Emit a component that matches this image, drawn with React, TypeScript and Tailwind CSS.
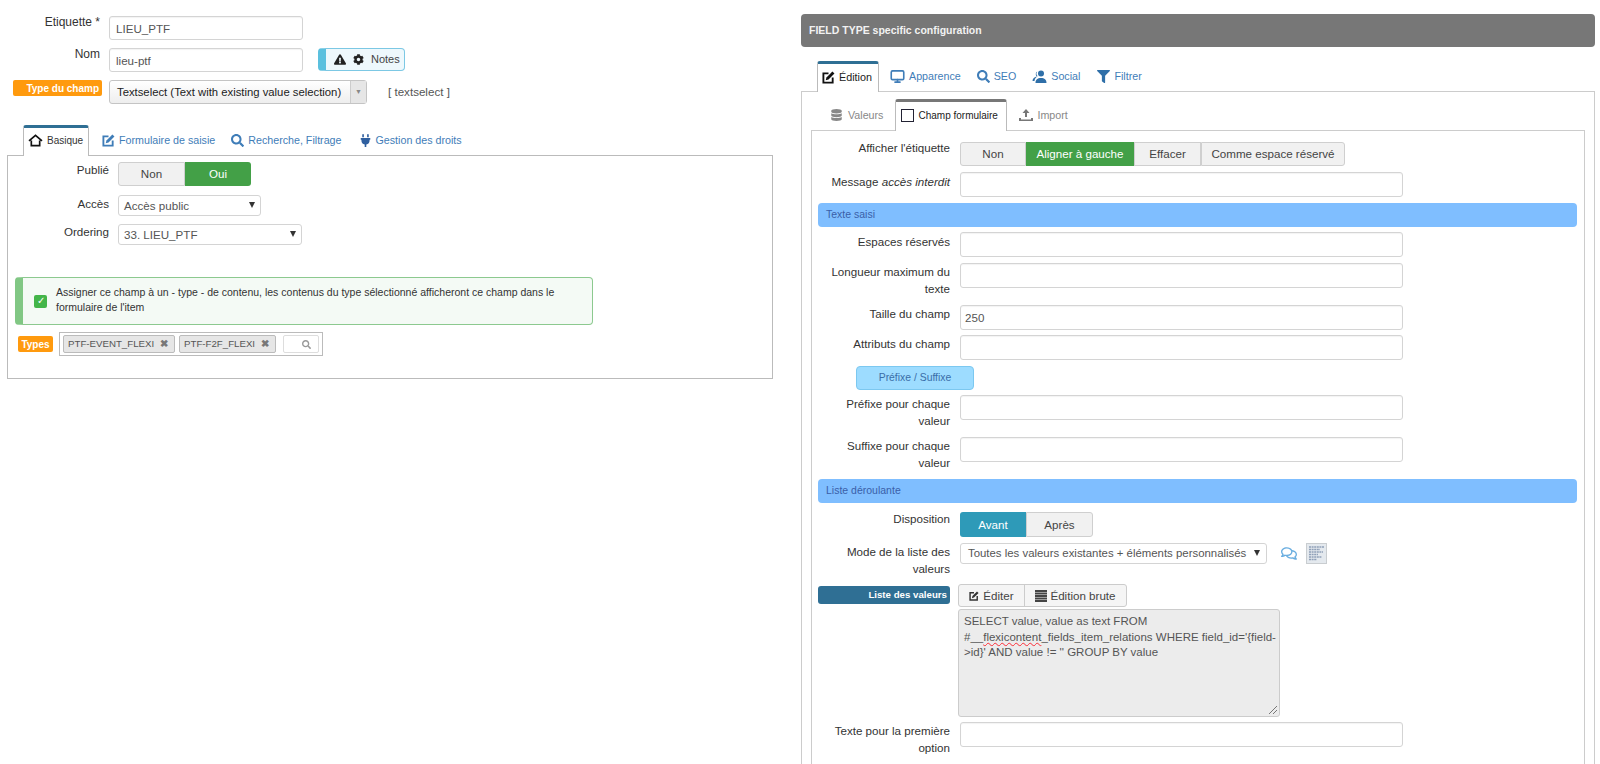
import React from 'react';
import { FaCog, FaDatabase, FaExclamationTriangle, FaFilter, FaPlug, FaRegComments, FaSearch } from 'react-icons/fa';
import { FiMonitor } from 'react-icons/fi';

const Label = ({ children, className = '' }: { children: React.ReactNode; className?: string }) => (
  <div className={`text-right text-[11.6px] leading-[17px] text-[#333] ${className}`}>{children}</div>
);

const Field = ({ value = '', className = '' }: { value?: string; className?: string }) => (
  <input
    readOnly
    value={value}
    className={`h-[24px] rounded-[3px] border border-[#d4d4d4] bg-white text-[11.6px] text-[#555] shadow-[inset_0_1px_1px_rgba(0,0,0,0.05)] outline-none ${className}`}
  />
);

const FormRow = ({ label, value, className = '', labelClass = '' }: { label: React.ReactNode; value?: string; className?: string; labelClass?: string }) => (
  <div className={`flex ${className}`}>
    <Label className={`w-[132px] shrink-0 ${labelClass}`}>{label}</Label>
    <Field value={value} className="ml-[10px] h-[25px] w-[443px] px-[4px]" />
  </div>
);

const Section = ({ title, className = '' }: { title: string; className?: string }) => (
  <div className={`flex h-[24px] items-center rounded-[4px] bg-[#7fbeff] pl-[8px] text-[10.5px] text-[#3a5ea8] ${className}`}>{title}</div>
);

const Segment = ({ children, className = '' }: { children: React.ReactNode; className?: string }) => (
  <div className={`flex h-full items-center justify-center text-[11.6px] ${className}`}>{children}</div>
);

const Off = 'border border-[#cfcfcf] bg-[#f1f1f1] text-[#444]';

const Caret = ({ className = '' }: { className?: string }) => (
  <svg viewBox="0 0 8 8" className={`absolute h-[6px] w-[6px] fill-[#333] ${className}`}>
    <path d="M0 0h8L4 8z" />
  </svg>
);

const Chip = ({ text, className = '' }: { text: string; className?: string }) => (
  <div className={`flex h-[18px] items-center justify-between rounded-[2px] border border-[#bbb] bg-[#e6e6e6] pl-[4px] pr-[6px] text-[9.7px] text-[#555] ${className}`}>
    <span className="whitespace-nowrap">{text}</span>
    <span className="text-[10px] font-bold leading-none text-[#777]">✖</span>
  </div>
);

const Tab = ({ icon, text, className = '' }: { icon: React.ReactNode; text: string; className?: string }) => (
  <div className={`flex items-center gap-[4px] whitespace-nowrap text-[10.7px] font-medium text-[#3f7db8] ${className}`}>
    {icon}
    <span>{text}</span>
  </div>
);

const HomeIcon = () => (
  <svg viewBox="0 0 16 14" className="h-[13px] w-[15px] fill-none stroke-[#111] stroke-[1.8]">
    <path d="M1 7.5 8 1.5l7 6M3.5 7v5.5h9V7" />
  </svg>
);

const EditIcon = ({ color, className = 'h-[13px] w-[13px]' }: { color: string; className?: string }) => (
  <svg viewBox="0 0 14 14" className={className}>
    <path d="M7 2.5H1.5v10h10V7" fill="none" stroke={color} strokeWidth="2" />
    <path d="M11.2.6 13.4 2.8 7 9.2l-3 .8.8-3z" fill={color} />
  </svg>
);

const SocialIcon = () => (
  <svg viewBox="0 0 15 13" className="h-[13px] w-[15px] fill-[#2f6fa8]">
    <circle cx="9" cy="3.5" r="3" />
    <path d="M3.5 13c0-3.5 2-5 5.500-5s5.500 1.500 5.500 5zM5.200 1.500a3 3 0 0 0-.2 5C2.500 7 .5 8.500.5 11h2c.3-2 1-3.200 2.500-4.200.5-.3.500-.6.300-1a3.500 3.500 0 0 1-.1-4.300z" />
  </svg>
);

const UploadIcon = () => (
  <svg viewBox="0 0 14 12" className="h-[12px] w-[14px] fill-[#777]">
    <path d="M7 0 3.500 4H6v4h2V4h2.500zM0 9h2v1.500h10V9h2v3H0z" />
  </svg>
);

const BarsIcon = () => (
  <svg viewBox="0 0 12 12" className="h-[12px] w-[12px] fill-[#444]">
    <path d="M0 0h12v2H0zM0 2.500h12v2H0zM0 5h12v2H0zM0 7.500h12v2H0zM0 10h12v2H0z" />
  </svg>
);

const DocIcon = () => (
  <svg viewBox="0 0 21 21" className="h-[21px] w-[21px]">
    <rect width="21" height="21" fill="#c9cdd0" />
    <rect x="1" y="1" width="19" height="19" fill="#e4e9ee" />
    <path d="M3 4h15M3 6.500h11M3 9h14M3 11.500h9M3 14h13M3 16.500h8" stroke="#8fa0b8" strokeWidth="1.400" strokeDasharray="2 .6" />
  </svg>
);

const Grip = () => (
  <svg viewBox="0 0 8 8" className="absolute bottom-[2px] right-[2px] h-[8px] w-[8px] stroke-[#777]">
    <path d="M0 8 8 0M4 8l4-4" />
  </svg>
);

export default function App() {
  return (
    <div className="flex h-[764px] overflow-hidden bg-white font-['Liberation_Sans',Arial,sans-serif]">
      {/* left column */}
      <div className="w-[801px] shrink-0 pl-[7px] pt-[16px]">
        <div className="flex">
          <Label className="-mt-[2px] w-[93px] text-[12px]">Etiquette *</Label>
          <Field value="LIEU_PTF" className="ml-[9px] w-[194px] px-[6px]" />
        </div>
        <div className="mt-[8px] flex">
          <Label className="-mt-[2px] w-[93px] text-[12px]">Nom</Label>
          <Field value="lieu-ptf" className="ml-[9px] w-[194px] px-[6px]" />
          <div className="ml-[15px] flex h-[23px] w-[87px] items-center rounded-[4px] border border-[#7cc8e4] border-l-[8px] border-l-[#5bc0de] bg-[#eef8fc] pl-[8px] text-[11px] text-[#444]">
            <FaExclamationTriangle className="h-[11px] w-[12px] text-[#222]" />
            <FaCog className="ml-[7px] h-[11px] w-[11px] text-[#222]" />
            <span className="ml-[7px]">Notes</span>
          </div>
        </div>
        <div className="mt-[8px] flex">
          <div className="ml-[6px] flex h-[16px] w-[89px] items-center justify-end rounded-[2px] bg-[#ff9a0e] pr-[3px] text-[10px] font-bold text-white">Type du champ</div>
          <div className="relative ml-[7px] flex h-[24px] w-[258px] items-center whitespace-nowrap rounded-[3px] border border-[#c4c4c4] bg-[linear-gradient(#fff,#eee)] pl-[7px] text-[11.3px] text-[#222]">
            Textselect (Text with existing value selection)
            <div className="absolute right-0 top-0 flex h-full w-[16px] items-center justify-center border-l border-[#ccc] bg-[#e6e6e6] text-[7px] text-[#888]">▼</div>
          </div>
          <div className="ml-[21px] pt-[3px] text-[11.6px] text-[#555]">[ textselect ]</div>
        </div>

        <div className="mt-[21px] flex h-[30px] items-end pl-[16px]">
          <div className="z-10 -mb-px flex h-[31px] w-[66px] items-center gap-[4px] rounded-t-[3px] border border-b-0 border-[#bbb] border-t-[3px] border-t-[#2f6f94] bg-white pb-[3px] pl-[4px] text-[10px] font-medium text-[#333]">
            <HomeIcon />
            Basique
          </div>
          <Tab className="ml-[13px] h-[30px]" icon={<EditIcon color="#3f7db8" />} text="Formulaire de saisie" />
          <Tab className="ml-[16px] h-[30px]" icon={<FaSearch className="h-[13px] w-[13px] text-[#3f7db8]" />} text="Recherche, Filtrage" />
          <Tab className="ml-[17px] h-[30px]" icon={<FaPlug className="h-[13px] w-[13px] text-[#2f5f9f]" />} text="Gestion des droits" />
        </div>
        <div className="h-[224px] w-[766px] border border-[#bbb] pl-[7px] pt-[6px]">
          <div className="flex">
            <Label className="-mt-[1px] w-[94px]">Publié</Label>
            <div className="ml-[9px] flex h-[24px]">
              <Segment className={`w-[67px] rounded-l-[3px] ${Off}`}>Non</Segment>
              <Segment className="w-[66px] rounded-r-[3px] bg-[#43a047] text-white">Oui</Segment>
            </div>
          </div>
          <div className="mt-[9px] flex">
            <Label className="w-[94px]">Accès</Label>
            <div className="relative ml-[9px] flex h-[21px] w-[143px] items-center rounded-[3px] border border-[#d4d4d4] pl-[5px] text-[11.6px] text-[#555]">
              Accès public
              <Caret className="right-[5px] top-[6px]" />
            </div>
          </div>
          <div className="mt-[8px] flex">
            <Label className="-mt-[1px] w-[94px]">Ordering</Label>
            <div className="relative ml-[9px] flex h-[21px] w-[184px] items-center rounded-[3px] border border-[#d4d4d4] pl-[5px] text-[11.6px] text-[#555]">
              33. LIEU_PTF
              <Caret className="right-[5px] top-[6px]" />
            </div>
          </div>
          <div className="mt-[32px] flex h-[48px] w-[578px] items-center rounded-[4px] border border-[#8cc98f] border-l-[8px] border-l-[#81c784] bg-[#f4faf5] pl-[11px] text-[10.5px] leading-[15px] text-[#333]">
            <div className="flex h-[13px] w-[13px] shrink-0 items-center justify-center rounded-[2px] bg-[#43b549] text-[10px] leading-none text-white">✓</div>
            <div className="-mt-[3px] ml-[9px] w-[510px]">Assigner ce champ à un - type - de contenu, les contenus du type sélectionné afficheront ce champ dans le formulaire de l'item</div>
          </div>
          <div className="mt-[7px] flex items-center">
            <div className="ml-[3px] flex h-[16px] w-[35px] items-center justify-center rounded-[2px] bg-[#ff9a0e] text-[10px] font-bold text-white">Types</div>
            <div className="ml-[6px] flex h-[24px] w-[264px] items-center border border-[#bbb] pl-[3px]">
              <Chip text="PTF-EVENT_FLEXI" className="w-[112px]" />
              <Chip text="PTF-F2F_FLEXI" className="ml-[4px] w-[97px]" />
              <div className="ml-[7px] flex h-[18px] w-[36px] items-center justify-end rounded-[2px] border border-[#ddd] pr-[7px]">
                <FaSearch className="h-[9px] w-[9px] text-[#999]" />
              </div>
            </div>
          </div>
        </div>
      </div>

      {/* right column */}
      <div className="w-[794px] shrink-0 pt-[14px]">
        <div className="flex h-[33px] items-center rounded-[4px] bg-[#777] pl-[8px] text-[10.5px] font-bold text-[#f2f2f2]">FIELD TYPE specific configuration</div>
        <div className="mt-[14px] flex h-[30px] items-end pl-[16px]">
          <div className="z-10 -mb-px flex h-[31px] w-[62px] items-center gap-[4px] rounded-t-[3px] border border-b-0 border-[#bbb] border-t-[3px] border-t-[#2f6f94] bg-white pb-[2px] pl-[4px] text-[10.8px] font-medium text-[#222]">
            <EditIcon color="#111" />
            Édition
          </div>
          <Tab className="ml-[11px] h-[30px]" icon={<FiMonitor strokeWidth={2.6} className="h-[15px] w-[15px] text-[#3f7db8]" />} text="Apparence" />
          <Tab className="ml-[16px] h-[30px]" icon={<FaSearch className="h-[13px] w-[13px] text-[#3f7db8]" />} text="SEO" />
          <Tab className="ml-[16px] h-[30px]" icon={<SocialIcon />} text="Social" />
          <Tab className="ml-[17px] h-[30px]" icon={<FaFilter className="h-[13px] w-[13px] text-[#2f6fa8]" />} text="Filtrer" />
        </div>
        <div className="border border-b-0 border-[#ccc] pl-[9px] pr-[9px] pt-[6px]">
          <div className="flex h-[32px] items-end pl-[19px]">
            <Tab className="h-[30px] gap-[5px] font-normal text-[#888]" icon={<FaDatabase className="h-[12px] w-[13px] text-[#888]" />} text="Valeurs" />
            <div className="z-10 -mb-px ml-[12px] flex h-[32px] w-[112px] items-center gap-[4px] rounded-t-[3px] border border-b-0 border-[#bbb] border-t-[3px] border-t-[#777] bg-white pb-[2px] pl-[5px] text-[10px] font-medium text-[#222]">
              <div className="h-[13px] w-[13px] border border-[#223]" />
              Champ formulaire
            </div>
            <Tab className="ml-[12px] h-[30px] font-normal text-[#888]" icon={<UploadIcon />} text="Import" />
          </div>
          <div className="h-[640px] border border-[#ccc] pl-[6px] pr-[7px] pt-[11px]">
            <div className="flex">
              <Label className="-mt-[3px] w-[132px]">Afficher l'étiquette</Label>
              <div className="ml-[10px] flex h-[24px]">
                <Segment className={`w-[66px] rounded-l-[3px] ${Off}`}>Non</Segment>
                <Segment className="w-[108px] bg-[#43a047] text-white">Aligner à gauche</Segment>
                <Segment className={`w-[67px] ${Off}`}>Effacer</Segment>
                <Segment className={`w-[144px] rounded-r-[3px] ${Off}`}>Comme espace réservé</Segment>
              </div>
            </div>
            <FormRow className="mt-[6px]" labelClass="pt-[1px]" label={<>Message <i>accès interdit</i></>} />
            <Section title="Texte saisi" className="mt-[6px]" />
            <FormRow className="mt-[5px]" labelClass="pt-[1px]" label="Espaces réservés" />
            <FormRow className="mt-[6px]" label={<>Longueur maximum du<br />texte</>} />
            <FormRow className="mt-[8px]" label="Taille du champ" value="250" />
            <FormRow className="mt-[5px]" label="Attributs du champ" />
            <div className="ml-[38px] mt-[6px] flex h-[24px] w-[118px] items-center justify-center rounded-[4px] border border-[#7cc8f0] bg-[#9ddcff] text-[10.4px] text-[#3a6ea8]">Préfixe / Suffixe</div>
            <FormRow className="mt-[5px]" label={<>Préfixe pour chaque<br />valeur</>} />
            <FormRow className="mt-[8px]" label={<>Suffixe pour chaque<br />valeur</>} />
            <Section title="Liste déroulante" className="mt-[8px]" />
            <div className="mt-[9px] flex">
              <Label className="-mt-[2px] w-[132px]">Disposition</Label>
              <div className="ml-[10px] flex h-[25px]">
                <Segment className="w-[66px] rounded-l-[3px] bg-[#2e9ab8] text-white">Avant</Segment>
                <Segment className={`w-[67px] rounded-r-[3px] ${Off}`}>Après</Segment>
              </div>
            </div>
            <div className="mt-[6px] flex">
              <Label className="w-[132px]">Mode de la liste des<br />valeurs</Label>
              <div className="relative ml-[10px] flex h-[21px] w-[307px] items-center whitespace-nowrap rounded-[3px] border border-[#d4d4d4] pl-[7px] text-[11.4px] text-[#555]">
                Toutes les valeurs existantes + éléments personnalisés
                <Caret className="right-[6px] top-[6px]" />
              </div>
              <FaRegComments className="ml-[14px] mt-[3px] h-[15px] w-[16px] text-[#6aaee0]" />
              <div className="ml-[9px]"><DocIcon /></div>
            </div>
            <div className="mt-[7px] flex">
              <div className="mt-[2px] flex h-[18px] w-[132px] items-center justify-end rounded-[3px] bg-[#2f6f94] pr-[3px] text-[9.7px] font-bold text-white">Liste des valeurs</div>
              <div className="ml-[8px] w-[322px]">
                <div className="flex h-[23px] w-[169px] rounded-[3px] border border-[#ccc] bg-[#f5f5f5] text-[11.6px] text-[#444]">
                  <div className="flex w-[66px] items-center justify-center gap-[4px] border-r border-[#ccc]"><EditIcon color="#333" className="h-[10px] w-[10px]" />Éditer</div>
                  <div className="flex flex-1 items-center justify-center gap-[3px]"><BarsIcon />Édition brute</div>
                </div>
                <div className="relative mt-[2px] h-[108px] whitespace-nowrap rounded-[3px] border border-[#ccc] bg-[#ececec] pl-[5px] pt-[4px] text-[11.5px] leading-[15.5px] text-[#555]">
                  <div>SELECT value, value as text FROM</div>
                  <div>#__<span className="underline decoration-red-500 decoration-wavy decoration-1">flexicontent</span>_fields_item_relations WHERE field_id='{'{'}field-</div>
                  <div>&gt;id{'}'}' AND value != '' GROUP BY value</div>
                  <Grip />
                </div>
              </div>
            </div>
            <FormRow className="mt-[5px]" label={<>Texte pour la première<br />option</>} />
            <Label className="mt-[3px] w-[132px] whitespace-nowrap">Titre de l'information</Label>
          </div>
        </div>
      </div>
    </div>
  );
}
